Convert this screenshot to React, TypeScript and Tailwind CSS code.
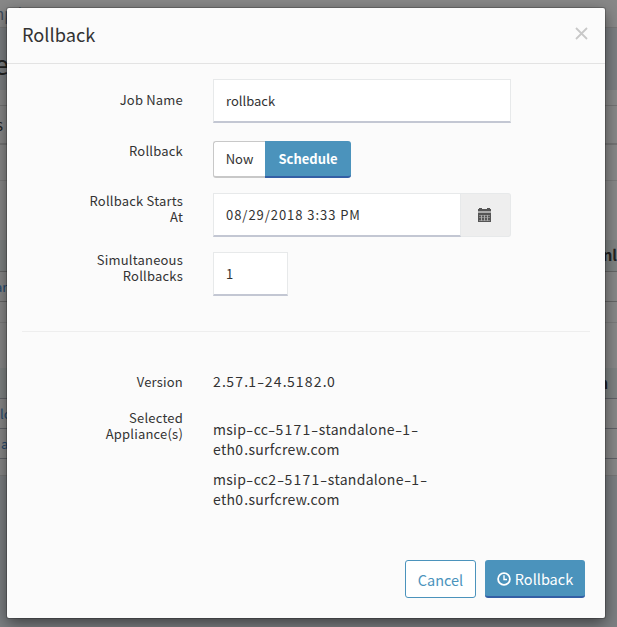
const font = "font-['Noto_Sans_CJK_SC','Noto_Sans',sans-serif]";

function PageBehind() {
  return (
    <div className="h-full w-full overflow-hidden bg-[#7c7f82] text-[#222]">
      <div className="flex h-[28px] items-center justify-between border-b border-[#777] bg-[#888] text-[15px] whitespace-nowrap text-[#3d4b5b]">
        <span className="-ml-[5px] mt-[2px]">npliances &nbsp; &nbsp;Deployments</span>
      </div>
      <div className="flex h-[62px] items-center text-[27px] leading-none">
        <span className="-ml-[6px] mt-[9px]">e</span>
      </div>
      <div className="h-[16px] border-b border-[#747474] bg-[#888]" />
      <div className="flex h-[39px] items-center border-b-2 border-[#747474] bg-[#888] text-[15px]">
        <span className="-ml-[4px] mt-[1px]">s</span>
      </div>
      <div className="h-[36px] border-b border-[#7b7b7b] bg-[#888]" />
      <div className="h-[59px] bg-[#888]" />
      <div className="flex h-[32px] items-center justify-end overflow-hidden border-b border-[#666] bg-[#7f8383] text-[15px] font-bold">
        <span>nl</span>
      </div>
      <div className="flex h-[30px] items-center border-b border-[#666] bg-[#888] text-[13px] text-[#254a70]">
        <span className="-ml-[5px]">ar</span>
      </div>
      <div className="h-[21px] border-b border-[#7b7b7b] bg-[#888]" />
      <div className="h-[45px] bg-[#888]" />
      <div className="flex h-[31px] items-center justify-end border-b border-[#606268] bg-[#7f8383] text-[15px] font-bold">
        <span className="mr-[9px]">n</span>
      </div>
      <div className="flex h-[30px] items-center border-b border-[#606268] bg-[#888] text-[13px] text-[#254a70]">lo</div>
      <div className="flex h-[30px] items-center border-b border-[#606268] bg-[#888] text-[13px] text-[#254a70]">
        <span className="ml-[1px]">a</span>
      </div>
      <div className="h-[17px] border-b border-[#777] bg-[#888]" />
    </div>
  );
}

function Calendar() {
  return (
    <svg width="13" height="14" viewBox="0 0 13 14" fill="none" shapeRendering="crispEdges" className="mr-[2px]">
      <path d="M1 0h3v1h5V0h3v1h1v2H0V1h1z" fill="#555" />
      <path d="M0 3h13v2H0z" fill="#aaa" />
      <path d="M0 5h13v9H0z" fill="#555" />
      <path d="M1 7.500h11M1 9.500h11M1 12.500h11" stroke="#888" />
      <path d="M3.500 7v6M6.500 7v6M9.500 7v6" stroke="#aaa" />
    </svg>
  );
}

function Clock() {
  return (
    <svg width="14" height="14" viewBox="0 0 14 14" fill="none" stroke="#fff">
      <circle cx="7" cy="7" r="5.900" strokeWidth="1.800" />
      <path d="M7 3.200v4.300h3" strokeWidth="1.400" />
    </svg>
  );
}

/** Sets host names and versions with wide figures and long hyphens. */
function Wide({ text }: { text: string }) {
  return (
    <>
      {text.split(/(-|\d+)/).map((part, i) =>
        part === "-" ? (
          <span key={i} className="inline-block w-[7.4px] origin-center scale-x-[1.5] text-center tracking-normal">-</span>
        ) : /^\d/.test(part) ? (
          <span key={i} className="tracking-[1.2px]">{part}</span>
        ) : (
          part
        ),
      )}
    </>
  );
}

const label = "w-[161px] shrink-0 text-right text-[13px] leading-[16px] tracking-[0.2px]";
const input = "flex items-center border border-b-2 border-[#e7e9ea] border-b-[#c3c7d3] bg-white pl-[12px] text-[13px]";
const value = "text-[14px] leading-[20px] tracking-[0.3px] whitespace-nowrap";

export default function App() {
  return (
    <div className={`relative h-[627px] w-[617px] overflow-hidden text-[#333] ${font}`}>
      <PageBehind />
      <div className="absolute top-[8px] left-[7px] flex h-[610px] w-[598px] flex-col rounded-[2px] bg-[#fbfbfb] shadow-[0_5px_15px_rgba(0,0,0,0.5),0_0_0_1px_rgba(0,0,0,0.2)]">
        <div className="flex h-[56px] items-center justify-between border-b border-[#e3e3e3] pr-[17px] pl-[15px]">
          <h4 className="-mt-[3px] text-[18.2px] leading-[26px]">Rollback</h4>
          <svg width="13" height="13" viewBox="0 0 13 13" className="-mt-[5px]" stroke="#c8c8c8" strokeWidth="1.800">
            <path d="M1 1l11 11M12 1L1 12" />
          </svg>
        </div>
        <div className="px-[15px]">
          <div className="mt-[15px] flex h-[44px] gap-[30px]">
            <div className={`${label} pt-[13px]`}>Job Name</div>
            <div className={`${input} w-[298px]`}>rollback</div>
          </div>
          <div className="mt-[18px] flex h-[37px] gap-[30px]">
            <div className={`${label} pt-[2px]`}>Rollback</div>
            <div className="flex text-[13px]">
              <div className="flex w-[52px] items-center justify-center rounded-l-[3px] border border-r-0 border-b-2 border-[#c8c8c8] bg-white">Now</div>
              <div className="flex w-[86px] items-center justify-center rounded-r-[3px] border-b-2 border-[#335fa5] bg-[#4b93bc] pt-[1px] font-bold text-white">Schedule</div>
            </div>
          </div>
          <div className="mt-[15px] flex h-[44px] gap-[30px]">
            <div className={label}>Rollback Starts<br />At</div>
            <div className="flex">
              <div className={`${input} w-[248px] tracking-[0.95px]`}>08/29/2018 3:33 PM</div>
              <div className="flex w-[50px] items-center justify-center rounded-r-[3px] border border-l-0 border-[#e7e9ea] bg-[#eee]"><Calendar /></div>
            </div>
          </div>
          <div className="mt-[15px] flex h-[44px] gap-[30px]">
            <div className={label}>Simultaneous<br />Rollbacks</div>
            <div className={`${input} w-[75px]`}>1</div>
          </div>
          <div className="mt-[35px] border-t border-[#eee]" />
          <div className="mt-[39px] flex gap-[30px]">
            <div className={`${label} pt-[3px]`}>Version</div>
            <div className={value}><Wide text="2.57.1-24.5182.0" /></div>
          </div>
          <div className="mt-[19px] flex gap-[30px]">
            <div className={label}>Selected<br />Appliance(s)</div>
            <div className={`${value} pt-[9px]`}>
              <p><Wide text="msip-cc-5171-standalone-1-" /><br /><Wide text="eth0.surfcrew.com" /></p>
              <p className="mt-[10px]"><Wide text="msip-cc2-5171-standalone-1-" /><br /><Wide text="eth0.surfcrew.com" /></p>
            </div>
          </div>
        </div>
        <div className="mt-auto mb-[20px] mr-[20px] flex justify-end gap-[9px] text-[14.5px]">
          <div className="flex h-[38px] w-[71px] items-center justify-center rounded-[3px] border border-[#4b93bc] bg-white pt-[2px] text-[#4b93bc]">Cancel</div>
          <div className="flex h-[38px] w-[100px] items-center justify-center gap-[4px] rounded-[3px] border-b-2 border-[#335fa5] bg-[#4b93bc] text-white">
            <div className="pt-[1px]"><Clock /></div>
            <span className="pt-[2px]">Rollback</span>
          </div>
        </div>
      </div>
    </div>
  );
}
